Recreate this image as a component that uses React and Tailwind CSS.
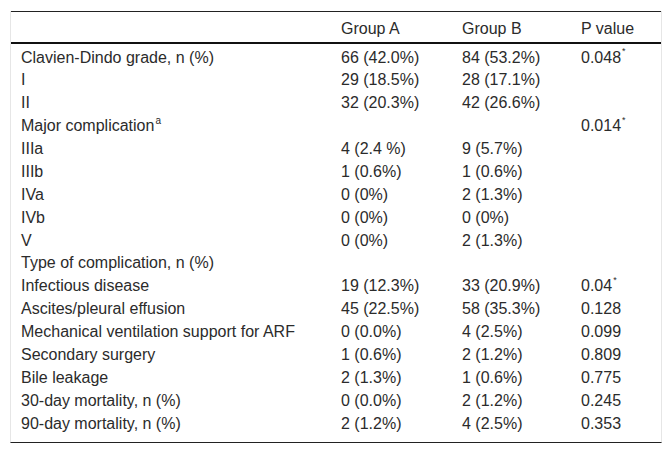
const rows = [
  ["Clavien-Dindo grade, n (%)", "66 (42.0%)", "84 (53.2%)", "0.048", true],
  ["I", "29 (18.5%)", "28 (17.1%)", ""],
  ["II", "32 (20.3%)", "42 (26.6%)", ""],
  ["Major complication", "", "", "0.014", true, "a"],
  ["IIIa", "4 (2.4 %)", "9 (5.7%)", ""],
  ["IIIb", "1 (0.6%)", "1 (0.6%)", ""],
  ["IVa", "0 (0%)", "2 (1.3%)", ""],
  ["IVb", "0 (0%)", "0 (0%)", ""],
  ["V", "0 (0%)", "2 (1.3%)", ""],
  ["Type of complication, n (%)", "", "", ""],
  ["Infectious disease", "19 (12.3%)", "33 (20.9%)", "0.04", true],
  ["Ascites/pleural effusion", "45 (22.5%)", "58 (35.3%)", "0.128"],
  ["Mechanical ventilation support for ARF", "0 (0.0%)", "4 (2.5%)", "0.099"],
  ["Secondary surgery", "1 (0.6%)", "2 (1.2%)", "0.809"],
  ["Bile leakage", "2 (1.3%)", "1 (0.6%)", "0.775"],
  ["30-day mortality, n (%)", "0 (0.0%)", "2 (1.2%)", "0.245"],
  ["90-day mortality, n (%)", "2 (1.2%)", "4 (2.5%)", "0.353"],
];

export default function App() {
  return (
    <div className="bg-white w-[672px] h-[453px] pt-[11px] pl-[10px] font-['Liberation_Sans',Arial,sans-serif] text-[16px] text-[#2b2b2b]">
      <div className="w-[652px] border-x border-[#e6e6e6] border-b border-b-[#222] pb-[7px]">
        <table className="w-full border-collapse table-fixed">
          <colgroup>
            <col className="w-[320px]" />
            <col className="w-[121px]" />
            <col className="w-[119px]" />
            <col />
          </colgroup>
          <thead>
            <tr className="border-t border-[#222] border-b-2 border-b-[#111]">
              <th className="h-[31px] px-[10px] pt-[4px] text-left font-normal leading-[18px]"></th>
              <th className="h-[31px] px-[10px] pt-[4px] text-left font-normal leading-[18px]">Group A</th>
              <th className="h-[31px] px-[10px] pt-[4px] text-left font-normal leading-[18px]">Group B</th>
              <th className="h-[31px] px-[10px] pt-[4px] text-left font-normal leading-[18px]">P value</th>
            </tr>
          </thead>
          <tbody>
            <tr>
              <td colSpan={4} className="h-[4px] p-0"></td>
            </tr>
            {rows.map((r, i) => (
              <tr key={i} className="leading-[22.875px]">
                <td className="px-[10px] py-0 whitespace-nowrap">
                  {r[0]}
                  {r[5] && <sup className="text-[10px] ml-[1px] top-[-0.7em]">{r[5]}</sup>}
                </td>
                <td className="px-[10px] py-0 whitespace-nowrap">{r[1]}</td>
                <td className="px-[10px] py-0 whitespace-nowrap">{r[2]}</td>
                <td className="px-[10px] py-0 whitespace-nowrap">
                  {r[3]}
                  {r[4] && <sup className="text-[9px] ml-[1px] top-[-0.9em]">*</sup>}
                </td>
              </tr>
            ))}
          </tbody>
        </table>
      </div>
    </div>
  );
}
